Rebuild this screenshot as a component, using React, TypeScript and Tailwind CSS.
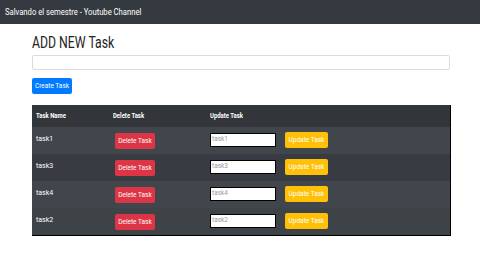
const tasks = ['task1', 'task3', 'task4', 'task2'];
const rowColors = ['bg-[#41464c]', 'bg-[#383c42]', 'bg-[#41464c]', 'bg-[#3e4348]'];

export default function App() {
  return (
    <div className="w-[480px] h-[270px] bg-white font-['Roboto',sans-serif] overflow-hidden">
      {/* Navbar */}
      <div className="h-[24px] bg-[#343a40] flex items-center px-[5px]">
        <span className="inline-block origin-left scale-x-[0.9] text-white text-[8.5px] leading-none whitespace-nowrap">
          Salvando el semestre - Youtube Channel
        </span>
      </div>

      <div className="ml-[32px] w-[418px]">
        <h1 className="mt-[10px] h-[16px] text-[17px] leading-none text-[#222]">
          <span className="inline-block origin-left scale-x-[0.72] whitespace-nowrap">ADD NEW Task</span>
        </h1>
        <input
          className="block w-full h-[15px] mt-[5px] border border-[#dcdcdc] rounded-[2px] bg-white"
          type="text"
        />
        <button className="mt-[8px] h-[16px] w-[40px] bg-[#007bff] rounded-[2px] text-white text-[6.5px] leading-none">
          Create Task
        </button>

        {/* Table */}
        <div className="mt-[10px] w-[419px] border-r border-b border-black">
          <div className="h-[22px] bg-[#32363b] flex items-center text-white text-[7px] font-bold">
            <div className="w-[81px] pl-[4px]">
              <span className="inline-block origin-left scale-x-[0.85] whitespace-nowrap">Task Name</span>
            </div>
            <div className="w-[97px]">
              <span className="inline-block origin-left scale-x-[0.85] whitespace-nowrap">Delete Task</span>
            </div>
            <div>
              <span className="inline-block origin-left scale-x-[0.85] whitespace-nowrap">Update Task</span>
            </div>
          </div>
          {tasks.map((t, i) => (
            <div key={t} className={`h-[27px] ${rowColors[i]} flex items-center text-white text-[7px]`}>
              <div className="w-[83px] pl-[4px] self-start pt-[7px]">{t}</div>
              <div className="w-[95px] flex items-center">
                <button className="h-[16px] w-[40px] mt-[2px] bg-[#dc3545] rounded-[2px] text-white text-[6.5px] leading-none">
                  Delete Task
                </button>
              </div>
              <div className="flex items-center gap-[9px]">
                <div className="h-[14px] w-[66px] bg-white border border-black flex items-center pl-[1px] text-[#999] text-[6.5px]">
                  {t}
                </div>
                <button className="h-[16px] w-[43px] bg-[#ffc107] rounded-[2px] text-white text-[6.5px] leading-none">
                  Update Task
                </button>
              </div>
            </div>
          ))}
        </div>
      </div>
    </div>
  );
}
